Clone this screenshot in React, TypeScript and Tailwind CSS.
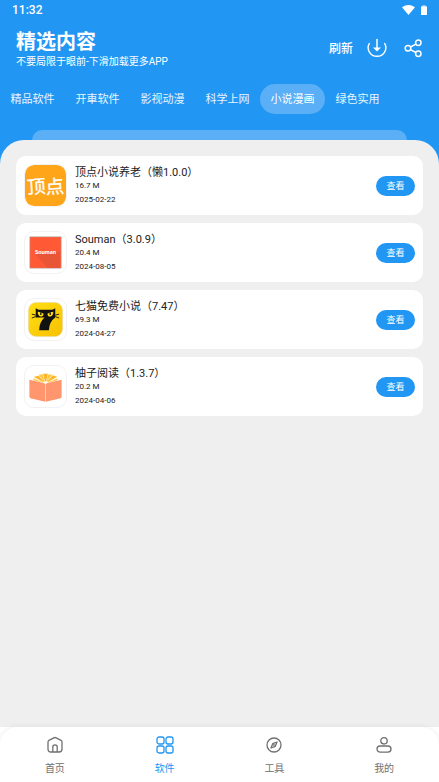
import React from 'react'

const categories = [
  '精品软件',
  '开車软件',
  '影视动漫',
  '科学上网',
  '小说漫画',
  '绿色实用',
]

const DingdianLogo = () => (
  <svg viewBox="0 0 42 42" className="size-full" aria-hidden="true">
    <rect width="42" height="42" rx="9" fill="#ffa51a" />
    <g
      fill="#fff"
      stroke="#fff"
      strokeWidth="0.3"
      fontFamily="'Noto Sans CJK SC', sans-serif"
      fontWeight="400"
    >
      <text x="2" y="29" fontSize="19" transform="rotate(-4 11 22)">
        顶
      </text>
      <text x="21" y="29" fontSize="19" transform="rotate(-4 31 22)">
        点
      </text>
    </g>
  </svg>
)

const SoumanLogo = () => (
  <svg viewBox="0 0 42 42" className="size-full" aria-hidden="true">
    <rect x="5" y="5" width="32" height="32" fill="#ff5935" stroke="#a9a09e" strokeWidth="0.6" />
    <path d="M11 23L36 20V37H23Z" fill="#e85637" />
    <text
      x="21"
      y="23"
      fill="#fff"
      fontSize="6"
      fontWeight="900"
      textAnchor="middle"
      fontFamily="Lato, sans-serif"
    >
      Souman
    </text>
  </svg>
)

const QimaoLogo = () => (
  <svg viewBox="0 0 42 42" className="size-full" aria-hidden="true">
    <defs>
      <linearGradient id="qimao" x1="0" y1="0" x2="1" y2="1">
        <stop offset="0" stopColor="#ffdf12" />
        <stop offset="1" stopColor="#f8c002" />
      </linearGradient>
    </defs>
    <rect x="3.5" y="3.5" width="35" height="35" rx="8" fill="url(#qimao)" stroke="#e5d9b5" strokeWidth="0.5" />
    <path
      d="M11 9.5L14 11H28L31 9.5V19Q25 23 24.5 32H14.5Q14.5 24 20 19H11Z"
      fill="#111"
    />
    <path d="M7 15.5L11 16.5M7 19.5L11 18M35 15.5L31 16.5M35 19.5L31 18" stroke="#111" strokeWidth="0.9" />
    <path d="M13 13Q16 13 19 15Q19 18 16 18Q13 17 13 13M29 13Q26 13 23 15Q23 18 26 18Q29 17 29 13" fill="#ffda12" />
    <path d="M16.2 13.5V16.5M25.8 13.5V16.5" stroke="#111" strokeWidth="1.3" />
  </svg>
)

const YouziLogo = () => (
  <svg viewBox="0 0 42 42" className="size-full" aria-hidden="true">
    <path d="M21 18L9 11L14 10Z" fill="#ffb52b" />
    <path d="M21 18L8 14.5L9 12.5Z" fill="#ffcf62" />
    <path d="M21 18L14 9L18 8.5Z" fill="#ffca3e" />
    <path d="M21 18L18.5 8H23.5Z" fill="#ffb42a" />
    <path d="M21 18L24 8.5L28 9Z" fill="#ffca3e" />
    <path d="M21 18L28.5 9.5L33 11Z" fill="#ffb52b" />
    <path d="M21 18L33 12.5L34 14.5Z" fill="#ffcf62" />
    <path d="M4.5 14L20.8 18V36.5L5.5 33Q4.5 32 4.5 31Z" fill="#ff966d" />
    <path d="M37.5 14L21.2 18V36.5L36.5 33Q37.5 32 37.5 31Z" fill="#ff966d" />
    <path d="M18 16.5L21 15.5L24 16.5L21 18.5Z" fill="#fff" />
  </svg>
)

const appList = [
  {
    id: 1,
    name: '顶点小说养老（懒1.0.0）',
    size: '16.7 M',
    date: '2025-02-22',
    Logo: DingdianLogo,
  },
  {
    id: 2,
    name: 'Souman（3.0.9）',
    size: '20.4 M',
    date: '2024-08-05',
    Logo: SoumanLogo,
  },
  {
    id: 3,
    name: '七猫免费小说（7.47）',
    size: '69.3 M',
    date: '2024-04-27',
    Logo: QimaoLogo,
  },
  {
    id: 4,
    name: '柚子阅读（1.3.7）',
    size: '20.2 M',
    date: '2024-04-06',
    Logo: YouziLogo,
  },
]

const navList = [
  {
    label: '首页',
    icon: (
      <>
        <path d="M3 7.2Q3 6 4 5.3L8.8 2.8Q10 2.2 11.2 2.8L16 5.3Q17 6 17 7.2V14Q17 17 14 17H6Q3 17 3 14Z" />
        <path d="M7.8 17V12Q7.8 9.8 10 9.8Q12.2 9.8 12.2 12V17" />
      </>
    ),
  },
  {
    label: '软件',
    active: true,
    icon: (
      <>
        <rect x="2" y="2" width="7" height="7" rx="2" />
        <rect x="11" y="2" width="7" height="7" rx="2" />
        <rect x="2" y="11" width="7" height="7" rx="2" />
        <rect x="11" y="11" width="7" height="7" rx="2" />
      </>
    ),
  },
  {
    label: '工具',
    icon: (
      <>
        <circle cx="10" cy="10" r="7" />
        <path d="M13 7L11.3 11.3L7 13L8.7 8.7Z" />
        <circle cx="10" cy="10" r="0.3" />
      </>
    ),
  },
  {
    label: '我的',
    icon: (
      <>
        <circle cx="10" cy="5.8" r="3.2" />
        <rect x="3" y="11" width="14" height="6.2" rx="3.1" />
      </>
    ),
  },
]

const StatusBar = () => (
  <div className="flex h-5 items-center justify-between px-3 text-[12px] font-medium">
    <span>11:32</span>
    <div className="flex items-center gap-1.5">
      <svg width="13" height="10" viewBox="0 0 13 10" fill="currentColor" aria-hidden="true">
        <path d="M0 2.3Q6.5 -2.3 13 2.3L6.5 10Z" />
      </svg>
      <svg width="6" height="10" viewBox="0 0 6 10" fill="currentColor" aria-hidden="true">
        <path d="M1.5 0H4.5V1.2H1.5Z" opacity="0.5" />
        <rect y="1.2" width="6" height="8.8" rx="0.5" />
      </svg>
    </div>
  </div>
)

const Header = () => (
  <header className="flex items-center justify-between px-4 pt-2">
    <div>
      <h1 className="text-[20px] leading-7 font-bold">精选内容</h1>
      <p className="text-[10px] leading-3">不要局限于眼前-下滑加载更多APP</p>
    </div>
    <div className="flex items-center">
      <button type="button" className="mr-3.5 pt-0.5 text-[12px] font-medium">
        刷新
      </button>
      <button type="button" aria-label="下载" className="mr-4">
        <svg width="20" height="20" viewBox="0 0 20 20" fill="none" stroke="currentColor" strokeWidth="1.4" strokeLinecap="round">
          <path d="M2.3 5.5A8.8 8.6 0 1 0 17.7 5.5" />
          <path d="M10 1.5V11" strokeWidth="1.5" />
          <path d="M6 9.5H14L10 13.5Z" fill="currentColor" stroke="none" />
        </svg>
      </button>
      <button type="button" aria-label="分享">
        <svg width="20" height="20" viewBox="0 0 20 20" fill="none" stroke="currentColor" strokeWidth="1.5">
          <circle cx="5" cy="10.3" r="2.8" />
          <circle cx="15.3" cy="4.8" r="2.7" />
          <circle cx="15.3" cy="15.8" r="2.7" />
          <path d="M7.5 9L12.9 6.1M7.5 11.6L12.9 14.5" />
        </svg>
      </button>
    </div>
  </header>
)

const App = () => {
  return (
    <div className="flex min-h-screen flex-col bg-[#2196f3] font-[Roboto,'Noto_Sans_CJK_SC',sans-serif] text-white">
      <StatusBar />
      <Header />
      <div className="mt-4 flex overflow-hidden">
        {categories.map((category) => (
          <button
            key={category}
            type="button"
            className={
              category === '小说漫画'
                ? 'h-[30px] w-[65px] shrink-0 rounded-full bg-[#5aaff7] pt-0.5 text-[11px]'
                : 'h-[30px] w-[65px] shrink-0 rounded-full pt-0.5 text-[11px] text-white/90'
            }
          >
            {category}
          </button>
        ))}
      </div>

      <div className="mx-8 mt-4 h-2.5 rounded-t-[10px] bg-[#5aaff7]" />
      <main className="flex-1 rounded-t-[24px] bg-[#efefef] p-4 text-[#222]">
        <ul className="flex flex-col gap-2">
          {appList.map(({ id, name, size, date, Logo }) => (
            <li
              key={id}
              className="flex items-center rounded-[10px] bg-white p-2"
            >
              <div className="size-[43px] shrink-0 overflow-hidden rounded-[10px] border border-[#f2f2f2]">
                <Logo />
              </div>
              <div className="ml-2 flex-1 pb-0.5">
                <h2 className="text-[11px] leading-[17px]">{name}</h2>
                <p className="text-[8px] leading-[10px]">{size}</p>
                <p className="mt-1 text-[8px] leading-[10px]">{date}</p>
              </div>
              <button
                type="button"
                className="h-5 w-[39px] rounded-full bg-[#2196f3] pt-0.5 text-[9px] text-white"
              >
                查看
              </button>
            </li>
          ))}
        </ul>
      </main>

      <div className="bg-white">
        <nav className="flex rounded-t-[18px] bg-white pt-2 shadow-[0_0_6px_rgba(0,0,0,0.08)]">
          {navList.map((item) => (
            <a
              key={item.label}
              href="#"
              className={
                item.active
                  ? 'flex flex-1 flex-col items-center pb-1.5 text-[#2196f3]'
                  : 'flex flex-1 flex-col items-center pb-1.5 text-[#707070]'
              }
            >
              <svg width="20" height="20" viewBox="0 0 20 20" fill="none" stroke="currentColor" strokeWidth="1.3" strokeLinejoin="round" aria-hidden="true">
                {item.icon}
              </svg>
              <span className="mt-1.5 text-[10px] leading-[15px]">{item.label}</span>
            </a>
          ))}
        </nav>
      </div>
    </div>
  )
}

export default App
